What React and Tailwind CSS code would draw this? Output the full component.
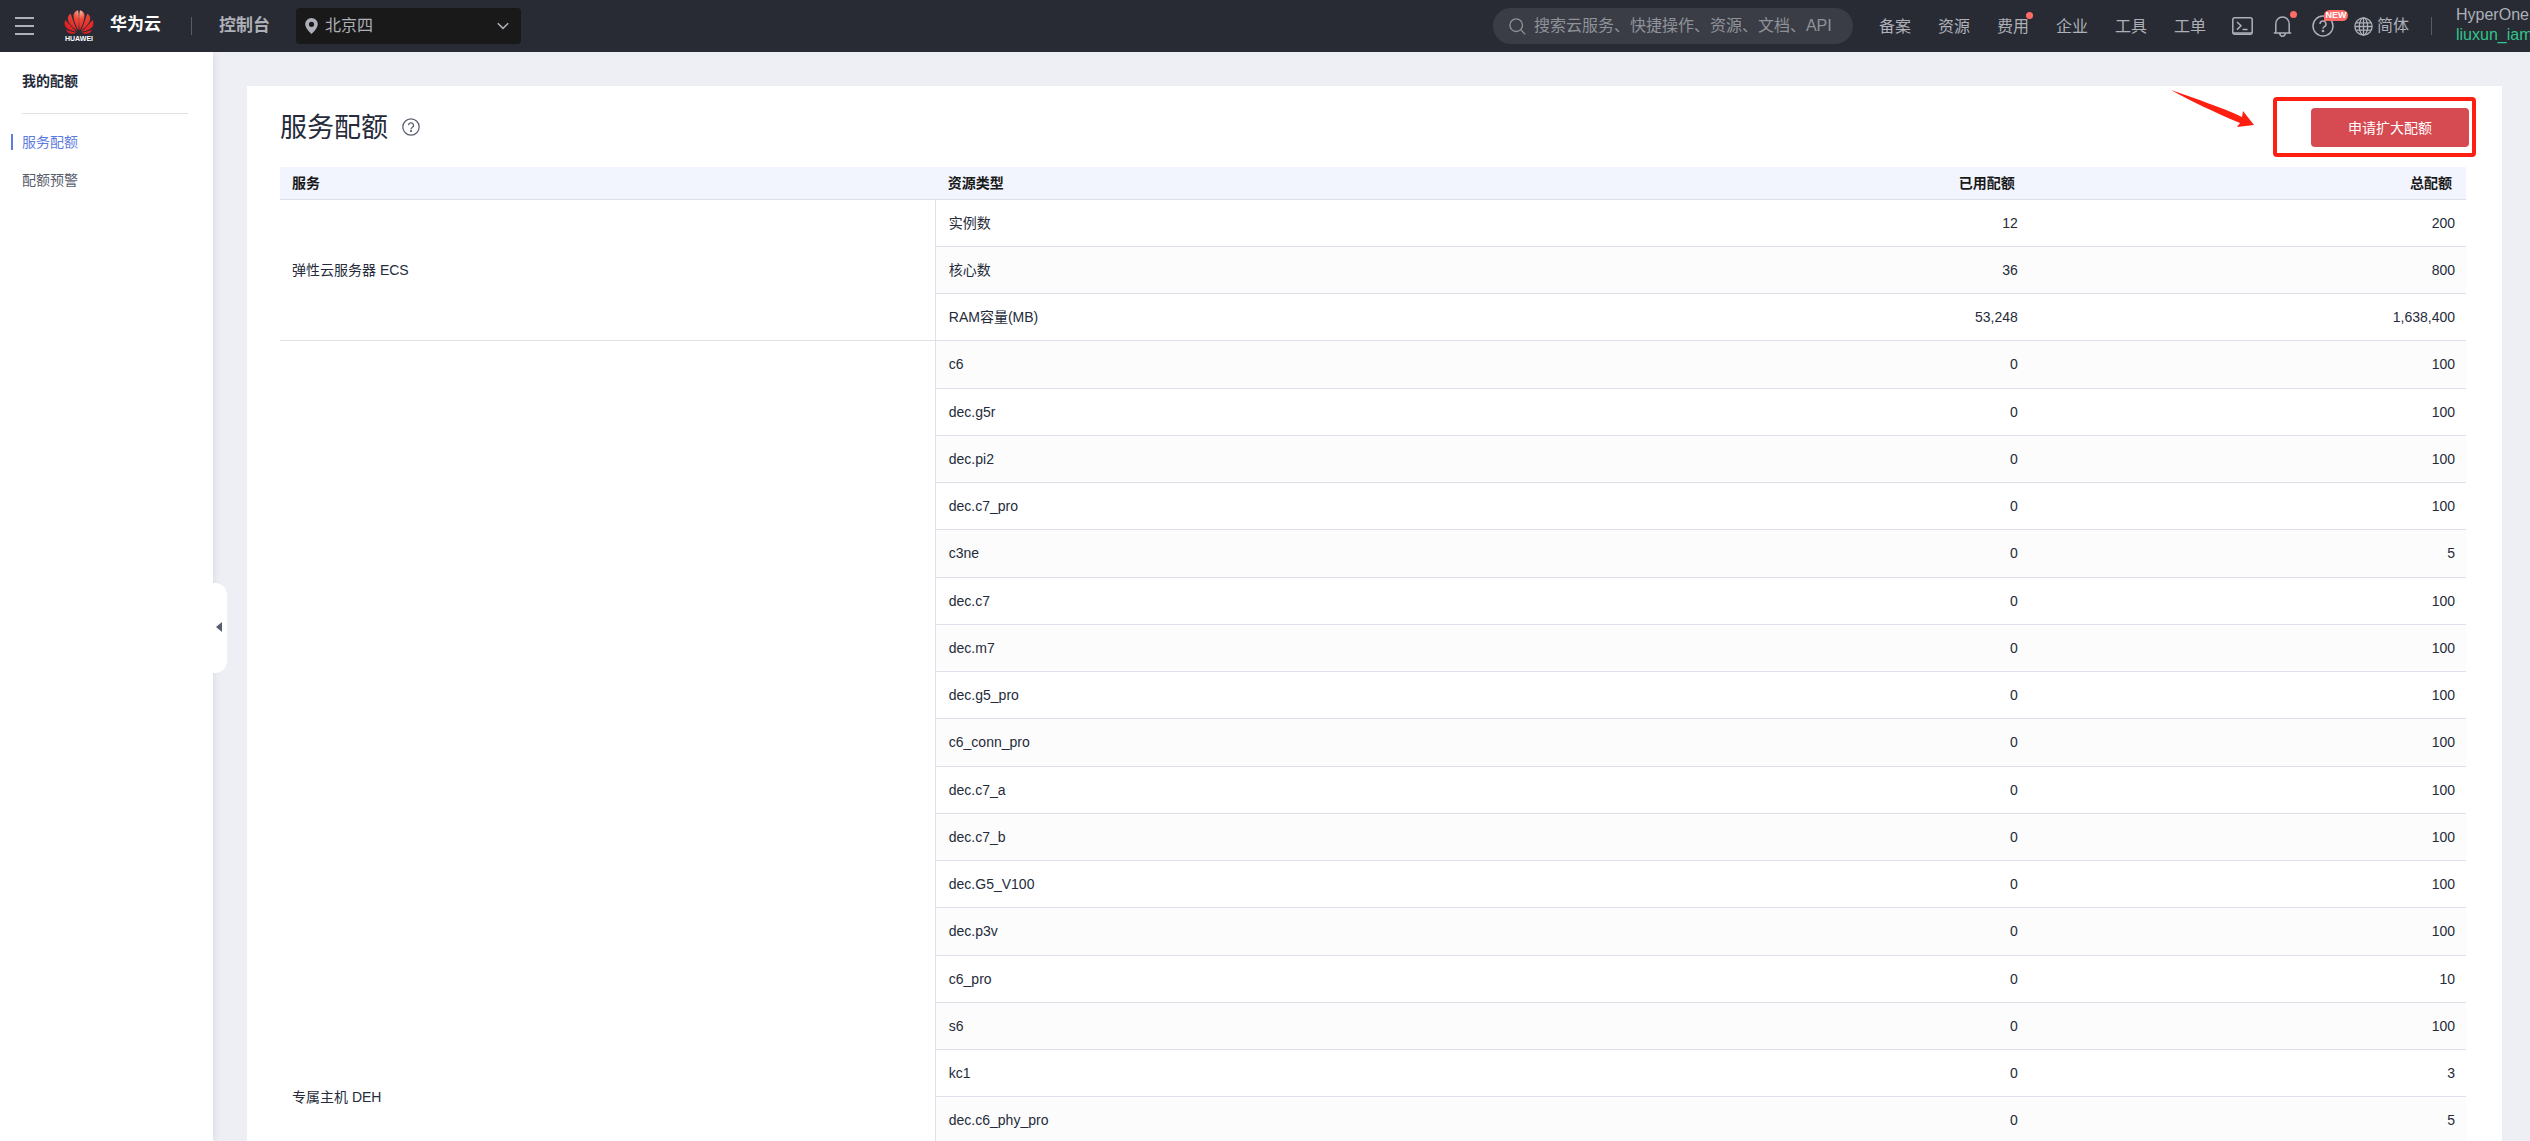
import React from "react";

const SERVICES = [
  {
    name: "弹性云服务器 ECS",
    rows: [
      ["实例数", "12", "200"],
      ["核心数", "36", "800"],
      ["RAM容量(MB)", "53,248", "1,638,400"],
    ],
  },
  {
    name: "专属主机 DEH",
    rows: [
      ["c6", "0", "100"],
      ["dec.g5r", "0", "100"],
      ["dec.pi2", "0", "100"],
      ["dec.c7_pro", "0", "100"],
      ["c3ne", "0", "5"],
      ["dec.c7", "0", "100"],
      ["dec.m7", "0", "100"],
      ["dec.g5_pro", "0", "100"],
      ["c6_conn_pro", "0", "100"],
      ["dec.c7_a", "0", "100"],
      ["dec.c7_b", "0", "100"],
      ["dec.G5_V100", "0", "100"],
      ["dec.p3v", "0", "100"],
      ["c6_pro", "0", "10"],
      ["s6", "0", "100"],
      ["kc1", "0", "3"],
      ["dec.c6_phy_pro", "0", "5"],
    ],
  },
];

const NAV = ["备案", "资源", "费用", "企业", "工具", "工单"];

function Logo() {
  return (
    <svg className="h-8 w-[30px]" viewBox="0 0 30 32" role="img" aria-label="HUAWEI">
      <defs>
        <radialGradient id="petal" gradientUnits="userSpaceOnUse" cx="16" cy="3" r="20">
          <stop offset="0" stopColor="#fcb49a" />
          <stop offset="0.35" stopColor="#ee4a3c" />
          <stop offset="1" stopColor="#dc1f22" />
        </radialGradient>
      </defs>
      <g fill="url(#petal)">
        <path d="M14.400 21.500C12 17 9.300 11 9.500 6.500 9.700 3 12.500 1.400 14 1.200 15.200 5 15 15 14.400 21.500Z" />
        <path d="M15.600 21.500C18 17 20.700 11 20.500 6.500 20.300 3 17.500 1.400 16 1.200 14.800 5 15 15 15.600 21.500Z" />
        <path d="M13.300 22C9 18.500 4.500 14.500 3.800 10.500 3.400 7.500 5 5.500 6.800 4.700 8 9 11 17 13.300 22Z" />
        <path d="M16.700 22C21 18.500 25.500 14.500 26.200 10.500 26.600 7.500 25 5.500 23.200 4.700 22 9 19 17 16.700 22Z" />
        <path d="M12.700 22.800C8 22 3 20.500 1.300 17.500 0 15 0.500 12.500 1.500 11 4.500 14.500 9.500 20 12.700 22.800Z" />
        <path d="M17.300 22.800C22 22 27 20.500 28.700 17.500 30 15 29.500 12.500 28.500 11 25.500 14.500 20.500 20 17.300 22.800Z" />
        <path d="M12.500 23.700C9 25.200 5 25.400 3 22.600 2.400 21.800 2.100 21.100 2 20.700 5 21.800 9.500 23.400 12.500 23.700Z" />
        <path d="M17.500 23.700C21 25.200 25 25.400 27 22.600 27.600 21.800 27.900 21.100 28 20.700 25 21.800 20.500 23.400 17.500 23.700Z" />
      </g>
      <text x="15" y="32" textAnchor="middle" fontSize="7" fontWeight="700" fill="#fff">HUAWEI</text>
    </svg>
  );
}

function HelpMark({ className }) {
  return (
    <svg className={className} viewBox="0 0 22 22" fill="none" stroke="currentColor" strokeWidth="1.500">
      <circle cx="11" cy="11" r="10" />
      <path d="M8 9a3 3 0 1 1 4.400 2.600c-.9.500-1.400 1-1.400 2.200" />
      <circle cx="11" cy="16" r="0.600" fill="currentColor" />
    </svg>
  );
}

function TopBar() {
  return (
    <header className="relative z-20 flex h-[52px] shrink-0 items-center bg-[#282b33] text-base text-[#adb0b8]">
      <button aria-label="菜单" className="ml-[15px] flex w-[19px] flex-col gap-[6px]">
        <span className="h-[2px] bg-[#adb0b8]" />
        <span className="h-[2px] bg-[#adb0b8]" />
        <span className="h-[2px] bg-[#adb0b8]" />
      </button>
      <a href="#home" className="ml-[30px] flex items-center gap-4 pb-[2px] text-[17px] font-bold text-white">
        <Logo />
        <span>华为云</span>
      </a>
      <span className="ml-[30px] h-[18px] w-px bg-[#575d6c]" />
      <a href="#console" className="ml-[27px] pb-px text-[17px] font-bold">控制台</a>
      <button className="ml-[26px] flex h-9 w-[225px] items-center rounded bg-[#191919] pl-[9px] pr-3">
        <svg className="h-4 w-[13px]" viewBox="0 0 13 16" fill="#adb0b8">
          <path fillRule="evenodd" d="M6.500 0A6.300 6.300 0 0 0 .2 6.300C.2 10.500 6.500 16 6.500 16s6.300-5.500 6.300-9.700A6.300 6.300 0 0 0 6.500 0Zm0 3.700a2.600 2.600 0 1 1 0 5.200 2.600 2.600 0 0 1 0-5.200Z" />
        </svg>
        <span className="ml-[7px]">北京四</span>
        <svg className="ml-auto h-2 w-3" viewBox="0 0 12 8" fill="none" stroke="#adb0b8" strokeWidth="1.500">
          <path d="M.8 1.200 6 6.400l5.200-5.200" />
        </svg>
      </button>

      <label className="ml-auto flex h-9 w-[360px] items-center rounded-full bg-[#3a3d45] pl-4">
        <svg className="h-[17px] w-[17px] shrink-0 text-[#8f9299]" viewBox="0 0 17 17" fill="none" stroke="currentColor" strokeWidth="1.300">
          <circle cx="7.200" cy="7.200" r="6.300" />
          <path d="m11.800 11.800 4.400 4.600" />
        </svg>
        <input
          aria-label="搜索"
          placeholder="搜索云服务、快捷操作、资源、文档、API"
          className="ml-2 min-w-0 flex-1 bg-transparent pb-px outline-none placeholder:text-[#8f9299]"
        />
      </label>
      <nav className="ml-[26px] flex gap-[27px] pt-px">
        {NAV.map((item) => (
          <a key={item} href="#nav" className="relative">
            {item}
            {item === "费用" && <span className="absolute -right-1 -top-[3px] h-[7px] w-[7px] rounded-full bg-[#ff6b66]" />}
          </a>
        ))}
      </nav>
      <button aria-label="命令行" className="ml-[26px]">
        <svg className="h-[18px] w-[21px]" viewBox="0 0 21 18" fill="none" stroke="currentColor" strokeWidth="1.500">
          <rect x="0.800" y="0.800" width="19.400" height="16.400" rx="2" />
          <path d="m5 5 4 3.800-4 3.800M10.500 12.600h5M1 16h19" />
        </svg>
      </button>
      <button aria-label="消息" className="relative ml-5">
        <svg className="h-[21px] w-[19px]" viewBox="0 0 19 21" fill="none" stroke="currentColor" strokeWidth="1.500">
          <path d="M.8 17h17.400M2.800 17V8.300C2.800 4 5.600 1 9.500 1s6.700 3 6.700 7.300V17M6.700 17.500c.2 1.700 1.300 2.700 2.800 2.700s2.600-1 2.800-2.700" />
        </svg>
        <span className="absolute -right-[5px] -top-[5px] h-[7px] w-[7px] rounded-full bg-[#ff6b66]" />
      </button>
      <button aria-label="帮助" className="relative ml-5">
        <HelpMark className="h-[22px] w-[22px]" />
        <span className="absolute -top-[5px] left-3 flex h-[11px] w-6 items-center justify-center rounded-full rounded-bl-none bg-[#ff6b66] text-[9px] font-bold leading-none text-white">
          NEW
        </span>
      </button>
      <button className="ml-5 flex items-center gap-1">
        <svg className="h-[19px] w-[19px]" viewBox="0 0 19 19" fill="none" stroke="currentColor" strokeWidth="1.300">
          <circle cx="9.500" cy="9.500" r="8.600" />
          <ellipse cx="9.500" cy="9.500" rx="4.200" ry="8.600" />
          <path d="M9.500 1v17M2 5.800h15M1 9.500h17M2 13.200h15" />
        </svg>
        <span className="pb-px">简体</span>
      </button>
      <span className="ml-[22px] h-[18px] w-px bg-[#575d6c]" />
      <button className="ml-6 w-[74px] overflow-hidden whitespace-nowrap pb-[2px] text-left leading-5">
        <span className="block">HyperOne</span>
        <span className="block text-[#31c48d]">liuxun_iam</span>
      </button>
    </header>
  );
}

function Sidebar() {
  return (
    <aside className="relative z-10 w-[213px] shrink-0 bg-white pl-[11px] text-sm shadow-[0_0_8px_rgba(37,43,58,0.12)]">
      <h2 className="ml-[11px] mr-[25px] border-b border-[#dfe1e6] pb-[22px] pt-[19px] font-bold leading-5 text-[#252b3a]">我的配额</h2>
      <nav className="mt-5 flex flex-col gap-[22px] leading-4">
        <a href="#quota" className="border-l-2 border-[#5e7ce0] pl-[9px] text-[#5e7ce0]">服务配额</a>
        <a href="#alarm" className="border-l-2 border-transparent pl-[9px] text-[#575d6c]">配额预警</a>
      </nav>
      <button
        aria-label="收起"
        className="absolute left-full top-[531px] flex h-[90px] w-[14px] items-center rounded-r-xl bg-white pb-[2px] pl-[3px]"
      >
        <svg className="h-[10px] w-[6px]" viewBox="0 0 6 10" fill="#575d6c">
          <path d="M6 0v10L0 5z" />
        </svg>
      </button>
    </aside>
  );
}

function QuotaTable() {
  return (
    <table className="w-full table-fixed border-separate border-spacing-0 text-sm text-[#252b3a]">
      <colgroup>
        <col className="w-[30%]" />
        <col className="w-[30%]" />
        <col className="w-[20%]" />
        <col className="w-[20%]" />
      </colgroup>
      <thead>
        <tr className="h-[33px] bg-[#f2f5fd] text-[#191919]">
          <th className="border-b border-[#dde0e8] pb-px pl-3 text-left">服务</th>
          <th className="border-b border-[#dde0e8] pb-px pl-3 text-left">资源类型</th>
          <th className="border-b border-[#dde0e8] pb-px pr-[14px] text-right">已用配额</th>
          <th className="border-b border-[#dde0e8] pb-px pr-[14px] text-right">总配额</th>
        </tr>
      </thead>
      <tbody>
        {SERVICES.map((service, s) =>
          service.rows.map(([type, used, total], i) => (
            <tr key={type} className="h-[47px] even:bg-[#fcfcfc] [&:nth-child(4n)]:h-12">
              {i === 0 && (
                <td
                  rowSpan={service.rows.length}
                  className={
                    s === 0
                      ? "border-b border-r border-[#dfe1e6] bg-white pb-px pl-3"
                      : "border-r border-[#dfe1e6] bg-white pb-[38px] pl-3 align-bottom"
                  }
                >
                  {service.name}
                </td>
              )}
              <td className="border-b border-[#dde0e8] pb-px pl-[13px]">{type}</td>
              <td className="border-b border-[#dde0e8] pb-px pr-[11px] text-right">{used}</td>
              <td className="border-b border-[#dde0e8] pb-px pr-[11px] text-right">{total}</td>
            </tr>
          ))
        )}
      </tbody>
    </table>
  );
}

export default function App() {
  return (
    <div className="flex h-screen flex-col overflow-hidden bg-[#eeeff5] font-['Liberation_Sans','Noto_Sans_CJK_SC',sans-serif]">
      <TopBar />
      <div className="flex min-h-0 flex-1">
        <Sidebar />
        <main className="ml-[34px] mr-7 mt-[34px] min-w-0 flex-1 bg-white pl-[33px] pr-9">
          <div className="flex h-[81px] items-center pt-px">
            <h1 className="pt-[2px] text-[27px] leading-9 text-[#252b3a]">服务配额</h1>
            <button aria-label="帮助" className="ml-[14px] text-[#575d6c]">
              <HelpMark className="h-[18px] w-[18px]" />
            </button>
            <div className="relative -mr-[10px] ml-auto flex h-[60px] w-[203px] items-center justify-end rounded border-4 border-[#ff1f10] pr-[3px] pt-px">
              <svg className="absolute -left-[106px] -top-[11px] h-10 w-[84px]" viewBox="0 0 84 40" fill="#ff1f10">
                <path d="M0 0C25 9 50 17 71 27L72 21 83 35 66 37 69 33C45 23 20 11 0 0Z" />
              </svg>
              <button className="h-[39px] w-[158px] rounded-sm bg-[#d64a52] text-sm text-white">申请扩大配额</button>
            </div>
          </div>
          <QuotaTable />
        </main>
      </div>
    </div>
  );
}
